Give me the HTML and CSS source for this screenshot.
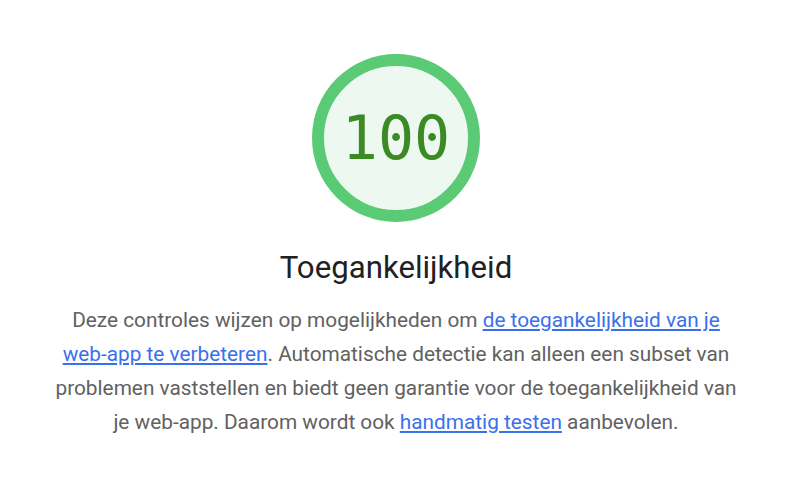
FILE: index.html
```html
<!DOCTYPE html>
<html lang="nl">
<head>
    <meta charset="utf-8">
    <title>Toegankelijkheid</title>
    <link rel="stylesheet" href="styles.css">
</head>
<body>
    <div class="category-header">
        <div class="gauge">
            <svg class="gauge-svg" viewBox="0 0 168 168" width="168" height="168">
                <circle class="gauge-base" cx="84" cy="84" r="78"></circle>
                <circle class="gauge-arc" cx="84" cy="84" r="78"></circle>
            </svg>
            <div class="gauge-percentage">100</div>
        </div>

        <h2 class="category-title">Toegankelijkheid</h2>

        <p class="category-description">
            Deze controles wijzen op mogelijkheden om <a href="#">de toegankelijkheid van je web-app te verbeteren</a>. Automatische detectie kan alleen een subset van problemen vaststellen en biedt geen garantie voor de toegankelijkheid van je web-app. Daarom wordt ook <a href="#">handmatig testen</a> aanbevolen.
        </p>
    </div>
</body>
</html>
```

FILE: styles.css
```css
body {
    margin: 0;
    background-color: #fff;
    font-family: Roboto, "Noto Sans", Arial, sans-serif;
}

.category-header {
    width: 692px;
    margin: 0 auto;
    padding-top: 54px;
    padding-right: 8px;
    display: flex;
    flex-direction: column;
    align-items: center;
    text-align: center;
}

.gauge {
    position: relative;
    width: 168px;
    height: 168px;
}

.gauge-svg {
    display: block;
}

.gauge-base {
    fill: #edf8f1;
    stroke: none;
}

.gauge-arc {
    fill: none;
    stroke: #5acb74;
    stroke-width: 12;
}

.gauge-percentage {
    position: absolute;
    top: 0;
    left: 0;
    width: 100%;
    height: 100%;
    display: flex;
    align-items: center;
    justify-content: center;
    font-family: "DejaVu Sans Mono", "Liberation Mono", monospace;
    font-size: 60px;
    color: #3b8a23;
}

.category-title {
    margin: 28px 0 0;
    font-size: 31.2px;
    font-weight: 400;
    line-height: 36px;
    color: #212121;
}

.category-description {
    margin: 17px 0 0;
    font-size: 20.8px;
    line-height: 34px;
    color: #616161;
}

.category-description a {
    color: #3a70ec;
    text-decoration: underline;
}
```
